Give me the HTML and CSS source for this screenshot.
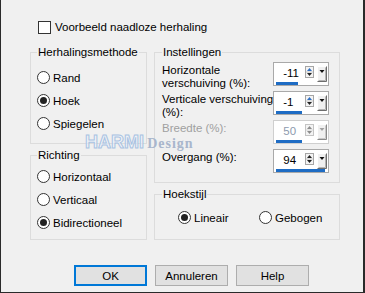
FILE: index.html
```html
<!doctype html>
<html>
    <head>
        <meta charset="utf-8" />
        <title>Naadloze herhaling</title>
        <link rel="stylesheet" href="styles.css">
    </head>
    <body>
        <label class="check">
            <span class="check-box"></span>
            Voorbeeld naadloze herhaling
        </label>

        <div class="columns">
            <div class="col">
                <fieldset class="group method">
                    <legend>Herhalingsmethode</legend>
                    <div class="radio"><span class="dot"></span>Rand</div>
                    <div class="radio"><span class="dot on"></span>Hoek</div>
                    <div class="radio"><span class="dot"></span>Spiegelen</div>
                </fieldset>

                <fieldset class="group direction">
                    <legend>Richting</legend>
                    <div class="radio"><span class="dot"></span>Horizontaal</div>
                    <div class="radio"><span class="dot"></span>Verticaal</div>
                    <div class="radio"><span class="dot on"></span>Bidirectioneel</div>
                </fieldset>
            </div>

            <div class="col">
                <fieldset class="group settings">
                    <legend>Instellingen</legend>

                    <div class="row">
                        <div class="lbl">Horizontale<br>verschuiving (%):</div>
                        <div class="spin">
                            <span class="num">-11</span>
                            <svg class="updown" width="9" height="12" viewBox="0 0 9 12">
                                <rect x="0.5" y="0.5" width="8" height="11" fill="#f4f4f4" stroke="#a6a6a6" />
                                <line x1="1" y1="6" x2="8" y2="6" stroke="#c8c8c8" />
                                <polygon points="2,5 4.5,2 7,5" fill="#2f6fc4" />
                                <polygon points="2,7 7,7 4.5,10" fill="#222" />
                            </svg>
                            <svg class="drop" width="10" height="16" viewBox="0 0 10 16">
                                <rect x="0" y="0" width="10" height="16" fill="#f0f0f0" />
                                <polyline points="0.5,15.5 0.5,0.5 9.5,0.5" fill="none" stroke="#fff" />
                                <polyline points="0.5,15.5 9.5,15.5 9.5,0.5" fill="none" stroke="#6d6d6d" />
                                <polyline points="1.5,14.5 8.5,14.5 8.5,1.5" fill="none" stroke="#b4b4b4" />
                                <polygon points="2.5,4 7.5,4 5,7" fill="#111" />
                            </svg>
                            <span class="bar" style="width: 22px"></span>
                        </div>
                    </div>

                    <div class="row">
                        <div class="lbl">Verticale verschuiving<br>(%):</div>
                        <div class="spin">
                            <span class="num">-1</span>
                            <svg class="updown" width="9" height="12" viewBox="0 0 9 12">
                                <rect x="0.5" y="0.5" width="8" height="11" fill="#f4f4f4" stroke="#a6a6a6" />
                                <line x1="1" y1="6" x2="8" y2="6" stroke="#c8c8c8" />
                                <polygon points="2,5 4.5,2 7,5" fill="#2f6fc4" />
                                <polygon points="2,7 7,7 4.5,10" fill="#222" />
                            </svg>
                            <svg class="drop" width="10" height="16" viewBox="0 0 10 16">
                                <rect x="0" y="0" width="10" height="16" fill="#f0f0f0" />
                                <polyline points="0.5,15.5 0.5,0.5 9.5,0.5" fill="none" stroke="#fff" />
                                <polyline points="0.5,15.5 9.5,15.5 9.5,0.5" fill="none" stroke="#6d6d6d" />
                                <polyline points="1.5,14.5 8.5,14.5 8.5,1.5" fill="none" stroke="#b4b4b4" />
                                <polygon points="2.5,4 7.5,4 5,7" fill="#111" />
                            </svg>
                            <span class="bar" style="width: 26px"></span>
                        </div>
                    </div>

                    <div class="row disabled">
                        <div class="lbl">Breedte (%):</div>
                        <div class="spin">
                            <span class="num">50</span>
                            <svg class="updown" width="9" height="12" viewBox="0 0 9 12">
                                <rect x="0.5" y="0.5" width="8" height="11" fill="#f4f4f4" stroke="#c4c4c4" />
                                <line x1="1" y1="6" x2="8" y2="6" stroke="#d8d8d8" />
                                <polygon points="2,5 4.5,2 7,5" fill="#8c8c8c" />
                                <polygon points="2,7 7,7 4.5,10" fill="#8c8c8c" />
                            </svg>
                            <svg class="drop" width="10" height="16" viewBox="0 0 10 16">
                                <rect x="0" y="0" width="10" height="16" fill="#f0f0f0" />
                                <polyline points="0.5,15.5 0.5,0.5 9.5,0.5" fill="none" stroke="#fff" />
                                <polyline points="0.5,15.5 9.5,15.5 9.5,0.5" fill="none" stroke="#8a8a8a" />
                                <polyline points="1.5,14.5 8.5,14.5 8.5,1.5" fill="none" stroke="#c8c8c8" />
                                <polygon points="2.5,4 7.5,4 5,7" fill="#a0a0a0" />
                            </svg>
                            <span class="bar" style="width: 26px"></span>
                        </div>
                    </div>

                    <div class="row">
                        <div class="lbl">Overgang (%):</div>
                        <div class="spin">
                            <span class="num">94</span>
                            <svg class="updown" width="9" height="12" viewBox="0 0 9 12">
                                <rect x="0.5" y="0.5" width="8" height="11" fill="#f4f4f4" stroke="#a6a6a6" />
                                <line x1="1" y1="6" x2="8" y2="6" stroke="#c8c8c8" />
                                <polygon points="2,5 4.5,2 7,5" fill="#222" />
                                <polygon points="2,7 7,7 4.5,10" fill="#222" />
                            </svg>
                            <svg class="drop" width="10" height="16" viewBox="0 0 10 16">
                                <rect x="0" y="0" width="10" height="16" fill="#f0f0f0" />
                                <polyline points="0.5,15.5 0.5,0.5 9.5,0.5" fill="none" stroke="#fff" />
                                <polyline points="0.5,15.5 9.5,15.5 9.5,0.5" fill="none" stroke="#6d6d6d" />
                                <polyline points="1.5,14.5 8.5,14.5 8.5,1.5" fill="none" stroke="#b4b4b4" />
                                <polygon points="2.5,4 7.5,4 5,7" fill="#111" />
                            </svg>
                            <span class="bar" style="width: 49px"></span>
                        </div>
                    </div>
                </fieldset>

                <fieldset class="group corner">
                    <legend>Hoekstijl</legend>
                    <div class="radio-line">
                        <div class="radio"><span class="dot on"></span>Lineair</div>
                        <div class="radio"><span class="dot"></span>Gebogen</div>
                    </div>
                </fieldset>
            </div>
        </div>

        <div class="buttons">
            <button class="default">OK</button>
            <button>Annuleren</button>
            <button>Help</button>
        </div>

        <div class="watermark">
            <span class="harmi">HARMI</span>
            <span class="design">Design</span>
        </div>
    </body>
</html>
```
FILE: styles.css
```css
html {
    height: 100%;
}

body {
    position: relative;
    box-sizing: border-box;
    width: 365px;
    height: 293px;
    margin: 0;
    padding-top: 21px;
    background-color: #f0f0f0;
    border-left: 1px solid #2a2a2a;
    border-right: 2px solid #2a2a2a;
    border-bottom: 1px solid #2a2a2a;
    font-family: "Liberation Sans", Arial, sans-serif;
    font-size: 11.5px;
    color: #000;
}

.check {
    display: flex;
    align-items: center;
    height: 13px;
    margin-left: 37px;
    line-height: 13px;
}

.check-box {
    box-sizing: border-box;
    width: 13px;
    height: 13px;
    margin-right: 4px;
    background: #fff;
    border: 1px solid #333;
}

.columns {
    display: flex;
    gap: 7px;
    margin-top: 11px;
    padding-left: 29px;
}

.col {
    display: flex;
    flex-direction: column;
    gap: 4px;
}

.group {
    box-sizing: border-box;
    margin: 0;
    padding: 0 6px;
    border: 1px solid #dcdcdc;
}

.group legend {
    padding: 0 1px;
    line-height: 14px;
}

.method,
.direction {
    width: 117px;
}

.method {
    height: 99px;
    padding-top: 7px;
}

.direction {
    height: 92px;
    padding-top: 3px;
}

.settings,
.corner {
    width: 186px;
    padding-left: 7px;
}

.settings {
    height: 138px;
    padding-top: 3px;
    padding-right: 10px;
}

.corner {
    height: 53px;
    padding-top: 5px;
}

.radio {
    display: flex;
    align-items: center;
    height: 23px;
    white-space: nowrap;
}

.dot {
    position: relative;
    box-sizing: border-box;
    width: 13px;
    height: 13px;
    margin-right: 3px;
    background: #fff;
    border: 1px solid #333;
    border-radius: 50%;
}

.dot.on::after {
    content: "";
    position: absolute;
    top: 2px;
    left: 2px;
    width: 7px;
    height: 7px;
    border-radius: 50%;
    background: #222;
}

.radio-line {
    display: grid;
    grid-template-columns: 81px auto;
    padding-left: 16px;
}

/* fixed height: two-line labels hang below the spin box */
.row {
    display: flex;
    align-items: flex-start;
    height: 24px;
    margin-bottom: 5px;
}

.lbl {
    flex: 1;
    padding-top: 2px;
    line-height: 13px;
    white-space: nowrap;
}

.disabled .lbl {
    color: #a0a0a0;
}

.spin {
    box-sizing: border-box;
    display: grid;
    grid-template-columns: 29px 9px 13px;
    grid-template-rows: 16px 3px;
    width: 56px;
    height: 24px;
    padding: 3px 1px 0 2px;
    background: #fff;
    border: 1px solid #a9a9a9;
}

.disabled .spin {
    border-color: #cfcfcf;
}

.num {
    padding-left: 7px;
    line-height: 14px;
}

.disabled .num {
    color: #8d9aae;
}

.updown {
    display: block;
}

.drop {
    display: block;
    justify-self: end;
}

.bar {
    grid-column: 1 / 4;
    height: 3px;
    background: #1e6cc4;
}

.buttons {
    display: flex;
    gap: 8px;
    margin: 25px 0 0 73px;
}

button {
    box-sizing: border-box;
    width: 73px;
    height: 21px;
    padding: 0;
    background: #e1e1e1;
    border: 1px solid #adadad;
    font-family: inherit;
    font-size: 11.5px;
    color: #000;
}

button.default {
    border: 2px solid #0078d7;
}

/* watermark over the dialog */
.watermark {
    position: absolute;
    top: 133.75px;
    left: 84px;
    line-height: 16px;
    white-space: nowrap;
    pointer-events: none;
}

.harmi {
    font-family: "Liberation Sans", Arial, sans-serif;
    font-size: 18px;
    font-weight: bold;
    color: rgba(240, 245, 252, 0.6);
    -webkit-text-stroke: 1px #a8c2e2;
}

.design {
    font-family: "Liberation Serif", "Times New Roman", serif;
    font-size: 14px;
    font-weight: bold;
    letter-spacing: 1px;
    color: #a9b6cc;
}
```
